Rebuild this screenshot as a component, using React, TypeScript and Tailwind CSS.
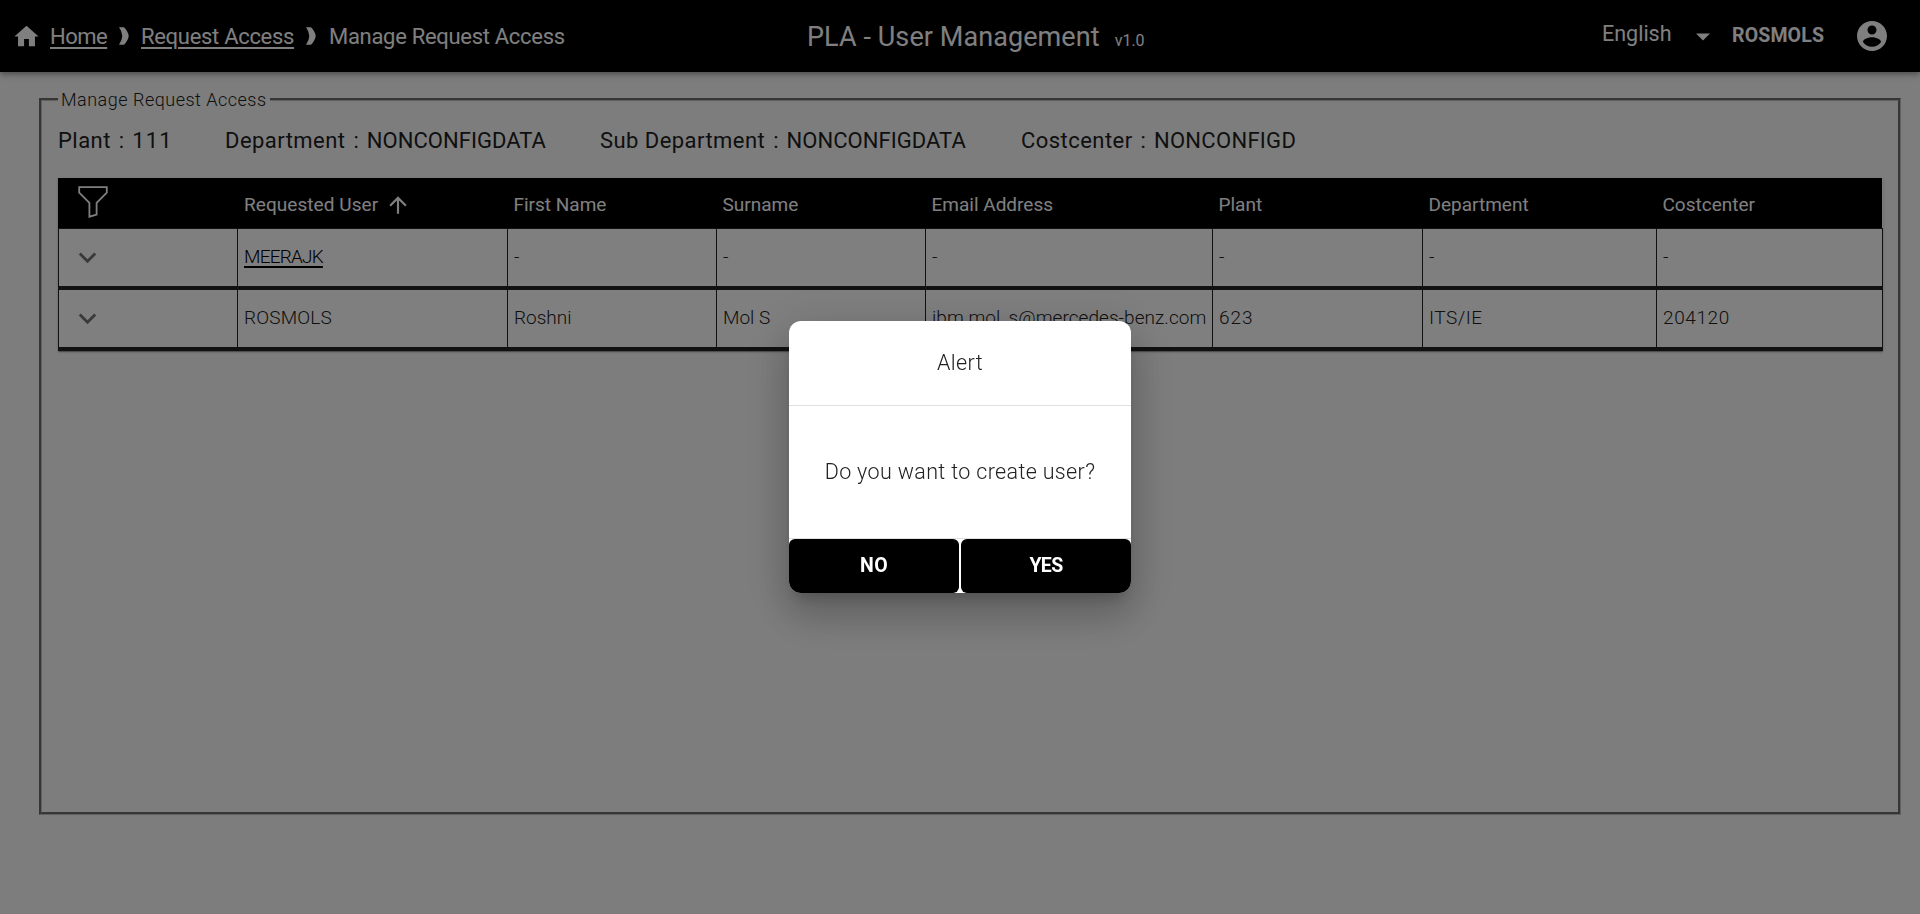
import type { ReactNode } from 'react';

const HomeIcon = () => (
  <svg viewBox="0 0 24 24" className="h-[29px] w-[29px] shrink-0" fill="currentColor">
    <path d="M10 20v-6h4v6h5v-8h3L12 3 2 12h3v8z" />
  </svg>
);

const Separator = () => (
  <svg viewBox="0 0 10 18" className="h-[18px] w-[10px] shrink-0" fill="currentColor">
    <path d="M0 0.3H5Q9.2 4.4 9.7 9Q9.2 13.6 5 17.7H0Q3.1 13.6 3.3 9Q3.1 4.4 0 0.3Z" />
  </svg>
);

const CaretIcon = () => (
  <svg viewBox="0 0 14 8" className="mt-px h-[8px] w-[14px]" fill="currentColor">
    <path d="M0 0.4h14l-7 7.2z" />
  </svg>
);

const AccountIcon = () => (
  <svg viewBox="0 0 24 24" className="h-[36px] w-[36px]" fill="currentColor">
    <path d="M12 2C6.48 2 2 6.48 2 12s4.48 10 10 10 10-4.48 10-10S17.52 2 12 2zm0 3c1.66 0 3 1.34 3 3s-1.34 3-3 3-3-1.34-3-3 1.34-3 3-3zm0 14.2c-2.5 0-4.71-1.28-6-3.22.03-1.99 4-3.08 6-3.08 1.99 0 5.97 1.09 6 3.08-1.29 1.94-3.5 3.22-6 3.22z" />
  </svg>
);

const FilterIcon = () => (
  <svg viewBox="0 0 30 32" className="h-[32px] w-[30px]" fill="none" stroke="currentColor" strokeWidth="1.8">
    <path d="M1.2 1.2H28.8V6.6L18.6 16.8V28.6L11.4 30.7V16.8L1.2 6.6Z" />
  </svg>
);

const ArrowUpIcon = () => (
  <svg viewBox="0 0 24 24" className="h-[26px] w-[26px]" fill="currentColor">
    <path d="M4 12l1.41 1.41L11 7.83V20h2V7.83l5.58 5.59L20 12l-8-8-8 8z" />
  </svg>
);

const ExpandIcon = () => (
  <svg viewBox="0 0 24 24" className="h-[35px] w-[35px] text-[#757575]" fill="currentColor">
    <path d="M16.59 8.59L12 13.17 7.41 8.59 6 10l6 6 6-6z" />
  </svg>
);

const details = [
  { label: 'Plant', value: '111', width: 'w-[167px]', valueTracking: 'tracking-[1.2px]' },
  { label: 'Department', value: 'NONCONFIGDATA', width: 'w-[375px]', valueTracking: 'tracking-[0.05px]' },
  { label: 'Sub Department', value: 'NONCONFIGDATA', width: 'w-[421px]', valueTracking: 'tracking-[0.05px]' },
  { label: 'Costcenter', value: 'NONCONFIGD', width: '', valueTracking: 'tracking-[0.3px]' },
];

const columns = 'grid grid-cols-[179px_270px_209px_209px_287px_210px_234px_1fr]';

const headings = ['First Name', 'Surname', 'Email Address', 'Plant', 'Department', 'Costcenter'];

const Cell = ({ children, className = '' }: { children: ReactNode; className?: string }) => (
  <div className={`flex items-center border-l border-[#222] pl-[6px] ${className}`}>{children}</div>
);

export default function App() {
  return (
    <div className="h-[914px] overflow-hidden bg-[#fafafa] font-['Roboto',sans-serif] text-[#212121]">
      <header className="relative flex h-[72px] items-center bg-black text-white shadow-[0_2px_4px_-1px_rgba(0,0,0,0.2),0_4px_5px_0_rgba(0,0,0,0.14),0_1px_10px_0_rgba(0,0,0,0.12)]">
        <nav className="flex w-[807px] items-center pl-[12px] text-[22px] leading-[70px]">
          <HomeIcon />
          <a className="ml-[9px] w-[57px] whitespace-nowrap pt-[2px] tracking-[-0.5px] underline decoration-2 underline-offset-[3px]">Home</a>
          <span className="mx-[12px] flex"><Separator /></span>
          <a className="w-[154px] whitespace-nowrap pt-[2px] tracking-[-0.3px] underline decoration-2 underline-offset-[3px]">Request Access</a>
          <span className="ml-[11px] mr-[13px] flex"><Separator /></span>
          <span className="whitespace-nowrap pt-[2px] tracking-[-0.3px]">Manage Request Access</span>
        </nav>
        <h1 className="flex flex-1 items-baseline pt-[2px] text-[27px] leading-[32px] tracking-[0.08px]">
          PLA - User Management
          <span className="ml-[15px] text-[16px] leading-[18px] tracking-normal">v1.0</span>
        </h1>
        <div className="flex items-center">
          <span className="w-[94px] pb-[4px] text-[21.5px]">English</span>
          <CaretIcon />
          <span className="ml-[22px] w-[122px] text-[19.5px] font-bold tracking-[0.15px]">ROSMOLS</span>
          <AccountIcon />
        </div>
        <div className="w-[30px]" />
      </header>

      <fieldset className="ml-[39px] mt-[17px] h-[726px] w-[1862px] border-[3px] border-[#c0c0c0] pl-[16px] pr-[15px] [border-style:groove]">
        <legend className="h-[21px] px-[3px] text-[18px] font-light leading-[21px] tracking-[0.5px]">Manage Request Access</legend>

        <div className="flex pt-[19px] text-[22px] leading-[24px]">
          {details.map((d) => (
            <div key={d.label} className={`flex ${d.width}`}>
              <span className="tracking-[0.45px]">{d.label}</span>
              <span className="ml-[8px] mr-[8px]">:</span>
              <span className={d.valueTracking}>{d.value}</span>
            </div>
          ))}
        </div>

        <div className="mt-[25px] h-[173px] text-[19px] shadow-[0_2px_1px_-1px_rgba(0,0,0,0.2),0_1px_1px_0_rgba(0,0,0,0.14),0_1px_3px_0_rgba(0,0,0,0.12)]">
          <div className={`${columns} mr-px h-[50px] bg-black text-white`}>
            <div className="pl-[20px] pt-[8px]"><FilterIcon /></div>
            <div className="flex items-center pl-[7px] pt-[4px] tracking-[0.06px]">
              Requested User
              <span className="ml-[7px]"><ArrowUpIcon /></span>
            </div>
            {headings.map((h) => (
              <div key={h} className="flex items-center pl-[6.5px] pt-[4px]">{h}</div>
            ))}
          </div>
          <div className={`${columns} h-[62px] border-b-4 border-r border-t border-[#222] bg-white font-light`}>
            <Cell className="!pl-[11px]"><ExpandIcon /></Cell>
            <Cell>
              <span className="tracking-[-0.8px] text-black underline decoration-2 underline-offset-[3px]">MEERAJK</span>
            </Cell>
            {headings.map((h) => (
              <Cell key={h}>-</Cell>
            ))}
          </div>
          <div className={`${columns} h-[61px] border-b-4 border-r border-[#222] bg-white font-light`}>
            <Cell className="!pl-[11px]"><ExpandIcon /></Cell>
            <Cell className="tracking-[0.15px]">ROSMOLS</Cell>
            <Cell>Roshni</Cell>
            <Cell>Mol S</Cell>
            <Cell className="tracking-[0.05px]">ibm.mol_s@mercedes-benz.com</Cell>
            <Cell className="tracking-[0.9px]">623</Cell>
            <Cell className="tracking-[0.5px]">ITS/IE</Cell>
            <Cell className="tracking-[0.6px]">204120</Cell>
          </div>
        </div>
      </fieldset>

      <div className="fixed inset-0 flex items-center justify-center bg-black/50">
        <div
          role="dialog"
          className="flex h-[272px] w-[342px] flex-col overflow-hidden rounded-[12px] bg-white font-light shadow-[0_11px_15px_-7px_rgba(0,0,0,0.2),0_24px_38px_3px_rgba(0,0,0,0.14),0_9px_46px_8px_rgba(0,0,0,0.12)]"
        >
          <h2 className="flex h-[84px] items-center justify-center text-[21.5px] tracking-[0.4px]">Alert</h2>
          <div className="flex h-[134px] items-center justify-center border-y border-[#e0e0e0] text-[21.5px] tracking-[0.35px]">
            Do you want to create user?
          </div>
          <div className="flex h-[54px] gap-[2px] text-[19.5px] font-bold text-white">
            <button className="flex-1 rounded-[6px] bg-black tracking-[0.5px]">NO</button>
            <button className="flex-1 rounded-[6px] bg-black tracking-[-0.6px]">YES</button>
          </div>
        </div>
      </div>
    </div>
  );
}
